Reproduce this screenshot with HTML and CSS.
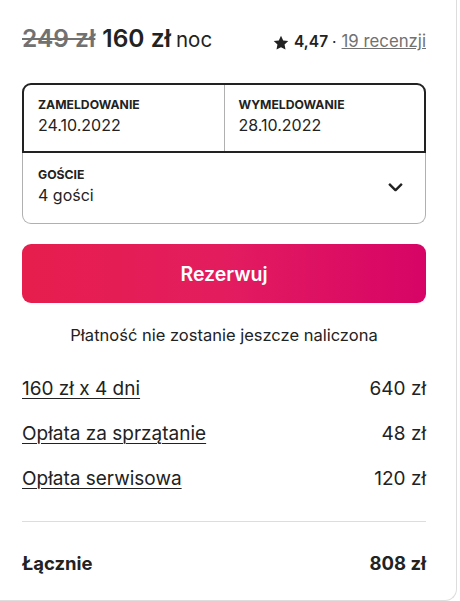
FILE: index.html
```html
<!DOCTYPE html>
<html lang="pl">
<head>
<meta charset="utf-8">
<link rel="stylesheet" href="styles.css">
</head>
<body>
<div class="card">
  <div class="head">
    <div class="price">
      <span class="old">249 zł</span>
      <span class="now">160 zł</span>
      <span class="per">noc</span>
    </div>
    <div class="rating">
      <svg class="star" viewBox="0 0 32 32" width="16" height="16"><path d="M16 1.5l4.4 9.3 10.1 1.3-7.4 7 1.9 10.1L16 24.3l-9 4.9 1.9-10.1-7.4-7 10.1-1.3z" fill="#222"/></svg>
      <span class="score">4,47</span>
      <span class="dot">·</span>
      <a class="reviews">19 recenzji</a>
    </div>
  </div>

  <div class="picker">
    <div class="dates">
      <div class="cell">
        <div class="label">ZAMELDOWANIE</div>
        <div class="value">24.10.2022</div>
      </div>
      <div class="cell cell-right">
        <div class="label">WYMELDOWANIE</div>
        <div class="value">28.10.2022</div>
      </div>
    </div>
    <div class="guests">
      <div>
        <div class="label">GOŚCIE</div>
        <div class="value">4 gości</div>
      </div>
      <svg class="chev" viewBox="0 0 32 32" width="17" height="17"><path d="M28 11L16.7 22.3a1 1 0 0 1-1.4 0L4 11" fill="none" stroke="#222" stroke-width="4.5"/></svg>
    </div>
  </div>

  <button class="reserve">Rezerwuj</button>
  <p class="note">Płatność nie zostanie jeszcze naliczona</p>

  <div class="lines">
    <div class="line"><a>160 zł x 4 dni</a><span>640 zł</span></div>
    <div class="line"><a>Opłata za sprzątanie</a><span>48 zł</span></div>
    <div class="line"><a>Opłata serwisowa</a><span>120 zł</span></div>
  </div>
  <div class="total"><span>Łącznie</span><span>808 zł</span></div>
</div>
</body>
</html>
```
FILE: styles.css
```css
html, body { margin: 0; padding: 0; background: #fff; }
body { font-family: Inter, "Noto Sans", sans-serif; color: #222; }
.card {
  box-sizing: border-box;
  width: 457px;
  height: 601px;
  padding: 23px 30px 0 22px;
  border-right: 1px solid #ddd;
  border-bottom: 1px solid #ddd;
  border-bottom-right-radius: 12px;
}
.head { display: flex; justify-content: space-between; align-items: baseline; height: 30px; line-height: 30px; }
.price { display: flex; align-items: baseline; }
.old { font-size: 24.5px; font-weight: 600; color: #717171; text-decoration: line-through; text-decoration-thickness: 2px; margin-right: 7px; }
.now { font-size: 24.5px; font-weight: 600; margin-right: 5px; }
.per { font-size: 20.5px; font-weight: 400; color: #222; }
.rating { display: flex; align-items: baseline; font-size: 15.5px; }
.star { align-self: center; margin-right: 5px; position: relative; top: 1px; }
.score { font-weight: 600; }
.dot { margin: 0 5px 0 4px; }
.reviews { color: #717171; text-decoration: underline; font-size: 16.8px; }
.picker { margin-top: 30px; }
.dates { display: flex; border: 2px solid #222; border-radius: 9px 9px 0 0; height: 70px; box-sizing: border-box; }
.cell { flex: 1; padding: 13px 14px 0; }
.cell-right { border-left: 1px solid #b0b0b0; }
.label { font-size: 12.2px; font-weight: 700; letter-spacing: 0; line-height: 14px; }
.value { font-size: 16px; margin-top: 3px; line-height: 20px; }
.guests { display: flex; justify-content: space-between; align-items: center; border: 1px solid #b0b0b0; border-top: none; border-radius: 0 0 9px 9px; height: 71px; box-sizing: border-box; padding: 0 21px 3px 15px; }
.reserve { display: block; width: 100%; height: 59px; margin-top: 20px; border: none; border-radius: 9px; background: linear-gradient(to right, #e61e4d, #e31c5f 50%, #d70466); color: #fff; font-family: inherit; font-size: 19.5px; font-weight: 600; }
.note { text-align: center; font-size: 16.5px; line-height: 20px; margin: 22px 0 0; }
.lines { margin-top: 32px; padding-bottom: 30px; border-bottom: 1px solid #ddd; display: flex; flex-direction: column; gap: 21px; }
.line { display: flex; justify-content: space-between; font-size: 19px; line-height: 24px; }
.line a { text-decoration: underline; text-decoration-thickness: 1px; text-underline-offset: 3px; }
.total { display: flex; justify-content: space-between; font-weight: 700; font-size: 18.5px; line-height: 24px; margin-top: 29px; }
```
